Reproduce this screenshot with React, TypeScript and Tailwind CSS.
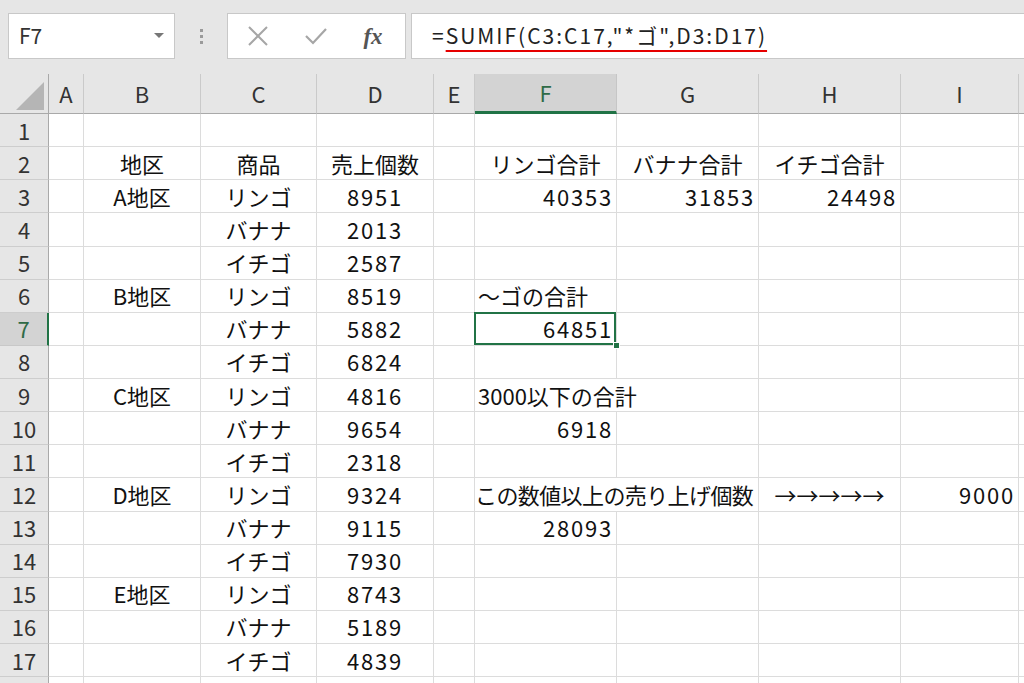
import React from "react";

type C = { t?: string; a?: "l" | "c" | "r"; span?: number; num?: boolean; sel?: boolean; arrow?: boolean; tight?: boolean };

const cols = ["A", "B", "C", "D", "E", "F", "G", "H", "I", "J"];

const rows: Record<number, Record<string, C>> = {
  2: { B: { t: "地区", a: "c" }, C: { t: "商品", a: "c" }, D: { t: "売上個数", a: "c" }, F: { t: "リンゴ合計", a: "c" }, G: { t: "バナナ合計", a: "c" }, H: { t: "イチゴ合計", a: "c" } },
  3: { B: { t: "A地区", a: "c" }, C: { t: "リンゴ", a: "c" }, D: { t: "8951", a: "c", num: true }, F: { t: "40353", a: "r", num: true }, G: { t: "31853", a: "r", num: true }, H: { t: "24498", a: "r", num: true } },
  4: { C: { t: "バナナ", a: "c" }, D: { t: "2013", a: "c", num: true } },
  5: { C: { t: "イチゴ", a: "c" }, D: { t: "2587", a: "c", num: true } },
  6: { B: { t: "B地区", a: "c" }, C: { t: "リンゴ", a: "c" }, D: { t: "8519", a: "c", num: true }, F: { t: "～ゴの合計", a: "l" } },
  7: { C: { t: "バナナ", a: "c" }, D: { t: "5882", a: "c", num: true }, F: { t: "64851", a: "r", num: true, sel: true } },
  8: { C: { t: "イチゴ", a: "c" }, D: { t: "6824", a: "c", num: true } },
  9: { B: { t: "C地区", a: "c" }, C: { t: "リンゴ", a: "c" }, D: { t: "4816", a: "c", num: true }, F: { t: "3000以下の合計", a: "l", span: 2 } },
  10: { C: { t: "バナナ", a: "c" }, D: { t: "9654", a: "c", num: true }, F: { t: "6918", a: "r", num: true } },
  11: { C: { t: "イチゴ", a: "c" }, D: { t: "2318", a: "c", num: true } },
  12: { B: { t: "D地区", a: "c" }, C: { t: "リンゴ", a: "c" }, D: { t: "9324", a: "c", num: true }, F: { t: "この数値以上の売り上げ個数", a: "l", span: 2, tight: true }, H: { t: "→→→→→", a: "c", arrow: true }, I: { t: "9000", a: "r", num: true } },
  13: { C: { t: "バナナ", a: "c" }, D: { t: "9115", a: "c", num: true }, F: { t: "28093", a: "r", num: true } },
  14: { C: { t: "イチゴ", a: "c" }, D: { t: "7930", a: "c", num: true } },
  15: { B: { t: "E地区", a: "c" }, C: { t: "リンゴ", a: "c" }, D: { t: "8743", a: "c", num: true } },
  16: { C: { t: "バナナ", a: "c" }, D: { t: "5189", a: "c", num: true } },
  17: { C: { t: "イチゴ", a: "c" }, D: { t: "4839", a: "c", num: true } },
};

function Cell({ c }: { c?: C }) {
  if (!c) return <div className="border-r border-b border-[#dcdcdc]" />;
  const align = c.a === "r" ? "justify-end pr-[3px]" : c.a === "c" ? "justify-center" : c.tight ? "justify-start pl-0" : "justify-start pl-[3px]";
  return (
    <div
      className={`relative flex items-center border-r border-b border-[#dcdcdc] whitespace-nowrap ${align} ${c.span === 2 ? "col-span-2" : ""} ${c.sel ? "overflow-visible" : "overflow-hidden"}`}
    >
      <span className={c.num ? "tracking-[1.8px]" : c.tight ? "tracking-[-0.6px]" : ""}>{c.t}</span>
      {c.sel && (
        <>
          <div className="absolute -left-[1px] -top-[1px] right-0 bottom-0 border-2 border-[#217346] pointer-events-none" />
          <div className="absolute -right-[4px] -bottom-[4px] w-[7px] h-[7px] bg-[#217346] border border-white" />
        </>
      )}
    </div>
  );
}

export default function App() {
  const rowNums = Array.from({ length: 18 }, (_, i) => i + 1);
  return (
    <div className="w-[1024px] h-[683px] overflow-hidden bg-white text-[#111] font-['Noto_Sans_CJK_JP',sans-serif]">
      {/* toolbar */}
      <div className="h-[74px] bg-[#e6e6e6] flex items-start pt-[13px]">
        <div className="ml-[8px] w-[167px] h-[46px] bg-white border border-[#c8c8c8] flex items-center justify-between pl-[10px] pr-[10px]">
          <span className="text-[21px] text-[#333]">F7</span>
          <svg width="10" height="6" viewBox="0 0 10 6"><polygon points="0,0 10,0 5,5" fill="#777" /></svg>
        </div>
        <div className="w-[52px] h-[46px] flex flex-col items-center justify-center gap-[3px]">
          <div className="w-[3px] h-[3px] bg-[#9a9a9a]" />
          <div className="w-[3px] h-[3px] bg-[#9a9a9a]" />
          <div className="w-[3px] h-[3px] bg-[#9a9a9a]" />
        </div>
        <div className="w-[179px] h-[46px] bg-white border border-[#c8c8c8] flex items-center">
          <div className="w-[58px] flex justify-center pl-[2px]">
            <svg width="22" height="20" viewBox="0 0 22 20"><path d="M2 1 L20 19 M20 1 L2 19" stroke="#a6a6a6" strokeWidth="2" fill="none" /></svg>
          </div>
          <div className="w-[58px] flex justify-center pl-[2px]">
            <svg width="22" height="18" viewBox="0 0 22 18"><path d="M1 9 L8 16 L21 2" stroke="#a6a6a6" strokeWidth="2.2" fill="none" /></svg>
          </div>
          <div className="w-[58px] flex justify-center">
            <span className="font-['Liberation_Serif',serif] italic font-bold text-[23px] text-[#555] leading-none">
              fx
            </span>
          </div>
        </div>
        <div className="ml-[5px] flex-1 h-[46px] bg-white border border-[#c8c8c8] border-r-0 flex items-center pl-[20px]">
          <span className="text-[21px] text-[#222] whitespace-nowrap tracking-[2px]">
            =<span className="underline decoration-[#e60000] decoration-2 underline-offset-[6px]">SUMIF(C3:C17,"*ゴ",D3:D17)</span>
          </span>
        </div>
      </div>

      {/* sheet */}
      <div className="grid grid-cols-[49px_35px_117px_116px_117px_41px_142px_142px_142px_118px_118px] grid-rows-[40px_repeat(18,33.13px)] text-[22px]">
        {/* header row */}
        <div className="bg-[#e6e6e6] border-r border-b border-[#a9a9a9] relative">
          <svg className="absolute left-0 top-0" width="49" height="40" viewBox="0 0 49 40">
            <polygon points="16,36 44,36 44,8" fill="#b5b5b5" />
          </svg>
        </div>
        {cols.map((c) =>
          c === "F" ? (
            <div key={c} className="bg-[#d3d3d3] border-r border-[#c6c6c6] border-b-[3px] border-b-[#217346] flex items-center justify-center text-[#2f6b47]">
              {c}
            </div>
          ) : (
            <div key={c} className="bg-[#e6e6e6] border-r border-[#cacaca] border-b border-b-[#a9a9a9] flex items-center justify-center text-[#333]">
              {c === "J" ? "" : c}
            </div>
          )
        )}
        {rowNums.map((r) => (
          <React.Fragment key={r}>
            {r === 7 ? (
              <div className="bg-[#d3d3d3] border-r-2 border-r-[#217346] border-b border-[#c8c8c8] flex items-center justify-center text-[#2f6b47]">{r}</div>
            ) : (
              <div className="bg-[#e6e6e6] border-r border-r-[#a9a9a9] border-b border-[#cdcdcd] flex items-center justify-center text-[#333]">{r <= 17 ? r : ""}</div>
            )}
            {(() => {
              const out: React.ReactNode[] = [];
              const data = rows[r] || {};
              for (let i = 0; i < cols.length; i++) {
                const k = cols[i];
                const c = data[k];
                if (c && c.arrow) {
                  out.push(
                    <div key={k} className="flex items-center justify-center border-r border-b border-[#dcdcdc] whitespace-nowrap overflow-hidden">
                      {c.t}
                    </div>
                  );
                  continue;
                }
                out.push(<Cell key={k} c={c} />);
                if (c && c.span === 2) i++;
              }
              return out;
            })()}
          </React.Fragment>
        ))}
      </div>
    </div>
  );
}
